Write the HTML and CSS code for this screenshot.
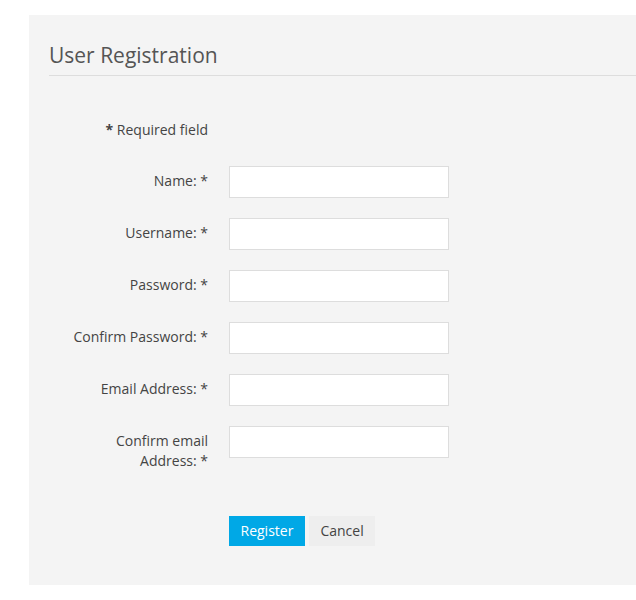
FILE: index.html
```html
<!DOCTYPE html>
<html>
<head>
<meta charset="utf-8">
<link rel="stylesheet" href="styles.css">
</head>
<body>
<div class="panel">
  <h2 class="title">User Registration</h2>
  <form class="form">
    <div class="row req-row">
      <div class="label"><b>*</b> Required field</div>
    </div>
    <div class="row">
      <label class="label">Name: *</label>
      <input class="field" type="text">
    </div>
    <div class="row">
      <label class="label">Username: *</label>
      <input class="field" type="text">
    </div>
    <div class="row">
      <label class="label">Password: *</label>
      <input class="field" type="password">
    </div>
    <div class="row">
      <label class="label">Confirm Password: *</label>
      <input class="field" type="password">
    </div>
    <div class="row">
      <label class="label">Email Address: *</label>
      <input class="field" type="text">
    </div>
    <div class="row">
      <label class="label">Confirm email<br>Address: *</label>
      <input class="field" type="text">
    </div>
    <div class="actions">
      <button type="button" class="btn btn-primary">Register</button>
      <button type="button" class="btn btn-default">Cancel</button>
    </div>
  </form>
</div>
</body>
</html>
```
FILE: styles.css
```css
html, body {
  margin: 0;
  padding: 0;
  background: #ffffff;
  overflow: hidden;
}
body {
  font-family: "Open Sans", "Liberation Sans", sans-serif;
  font-size: 14px;
  color: #444444;
}
.panel {
  margin: 15px 0 0 29px;
  background: #f4f4f4;
  padding: 25px 0 39px 20px;
}
.title {
  margin: 0;
  font-size: 21px;
  font-weight: 400;
  line-height: 30px;
  color: #555555;
  padding-bottom: 5px;
  border-bottom: 1px solid #dddddd;
}
.form {
  margin: 39px 0 0 0;
}
.row {
  display: grid;
  grid-template-columns: 159px 220px;
  column-gap: 21px;
  align-items: start;
  margin-bottom: 20px;
}
.req-row {
  margin-bottom: 26px;
}
.label {
  text-align: right;
  line-height: 20px;
  padding-top: 5px;
  color: #444444;
}
.label b {
  font-weight: 700;
}
.field {
  box-sizing: border-box;
  width: 220px;
  height: 32px;
  margin: 0;
  border: 1px solid #dddddd;
  background: #ffffff;
  padding: 4px 8px;
  font: inherit;
  outline: none;
}
.actions {
  display: flex;
  gap: 4px;
  margin-left: 180px;
  margin-top: 45px;
}
.btn {
  font-family: "Open Sans", "Liberation Sans", sans-serif;
  font-size: 14px;
  height: 30px;
  line-height: 30px;
  padding: 0 11.5px;
  border: none;
  margin: 0;
  cursor: pointer;
}
.btn-primary {
  background: #00a8e6;
  color: #ffffff;
}
.btn-default {
  background: #eeeeee;
  color: #444444;
}
```
